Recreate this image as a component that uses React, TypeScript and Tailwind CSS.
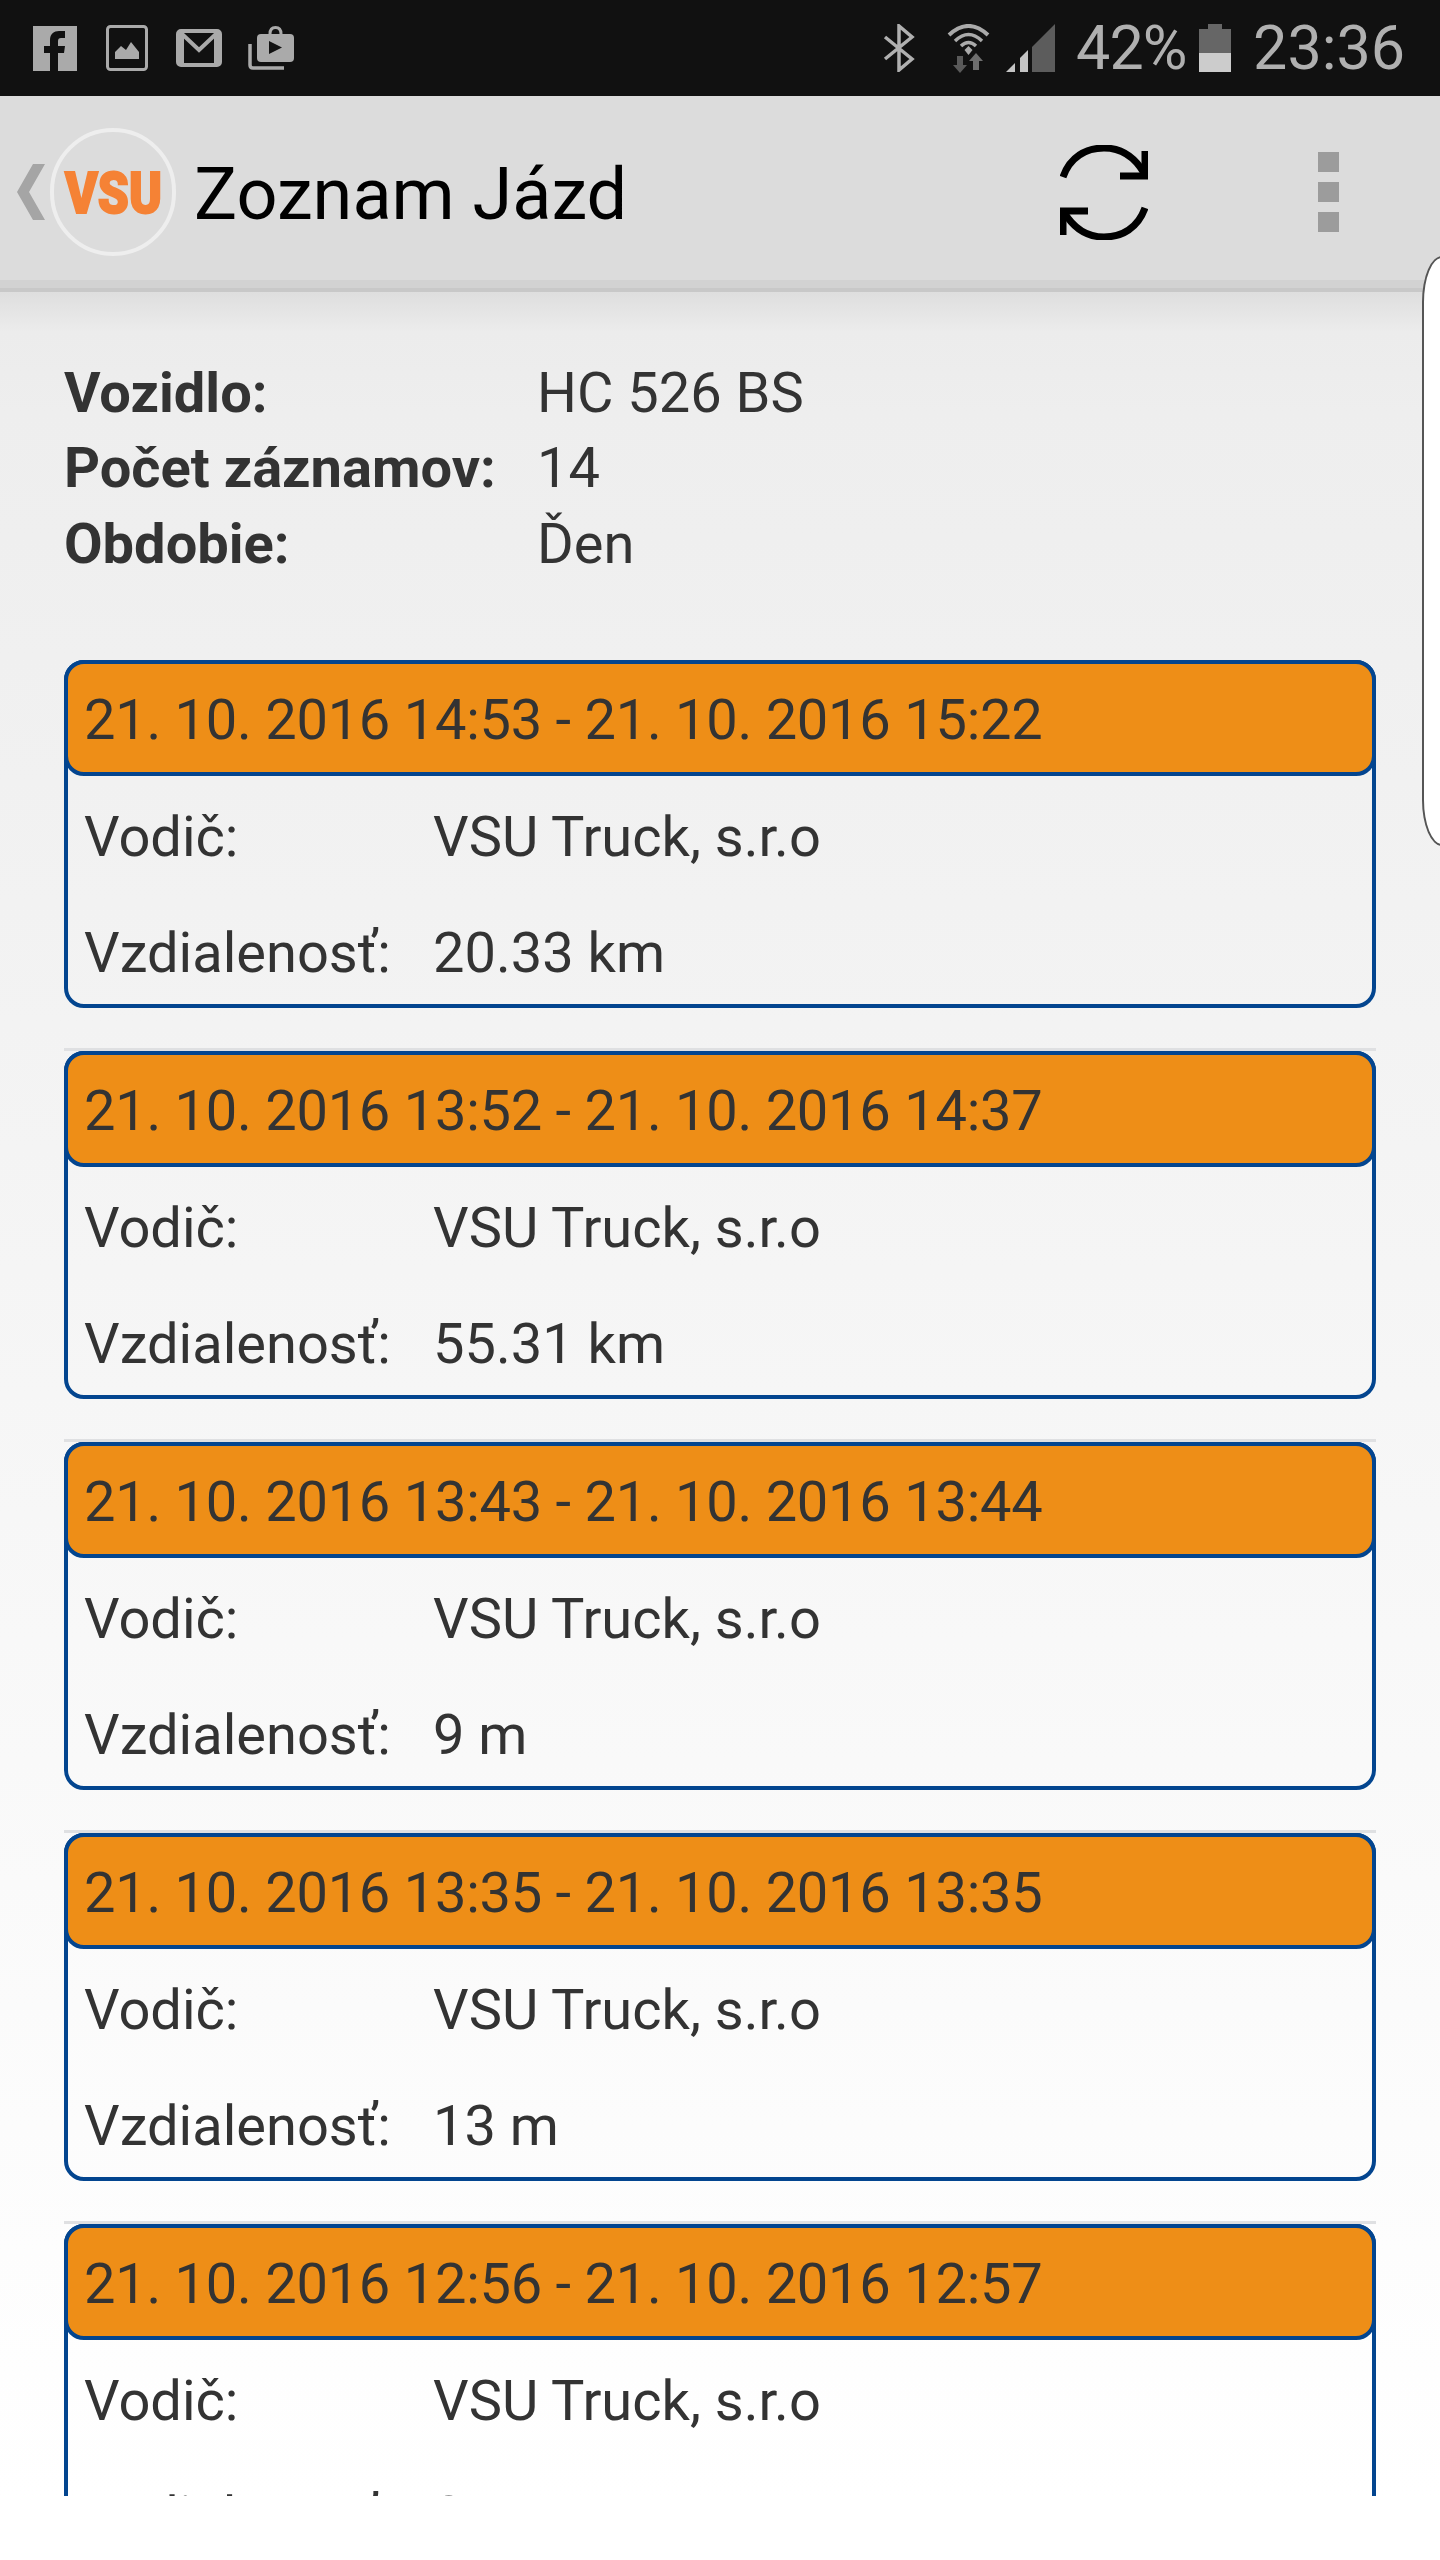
const trips = [
  { time: "21. 10. 2016 14:53 - 21. 10. 2016 15:22", distance: "20.33 km" },
  { time: "21. 10. 2016 13:52 - 21. 10. 2016 14:37", distance: "55.31 km" },
  { time: "21. 10. 2016 13:43 - 21. 10. 2016 13:44", distance: "9 m" },
  { time: "21. 10. 2016 13:35 - 21. 10. 2016 13:35", distance: "13 m" },
  { time: "21. 10. 2016 12:56 - 21. 10. 2016 12:57", distance: "8 m" },
];

const summary = [
  { label: "Vozidlo:", value: "HC 526 BS" },
  { label: "Počet záznamov:", value: "14" },
  { label: "Obdobie:", value: "Ďen" },
];

const StatusLeftIcons = () => (
  <div className="flex items-center">
    <svg width="44" height="45" viewBox="0 0 44 45">
      <rect width="44" height="45" fill="#aaaaaa" />
      <path d="M17 45V27h-6v-7h6v-6c0-6 4-9 9-9h6v7h-4c-2 0-3 1-3 3v5h7l-1 7h-6v18z" fill="#111111" />
    </svg>
    <svg className="ml-[29px]" width="42" height="46" viewBox="0 0 42 46">
      <rect x="1.5" y="1.5" width="39" height="43" rx="3" fill="none" stroke="#aaaaaa" strokeWidth="3" />
      <path d="M9 34v-7l6-6 5 4 5-8 8 10v7z" fill="#aaaaaa" />
    </svg>
    <svg className="ml-[28px]" width="46" height="38" viewBox="0 0 46 38">
      <rect x="2" y="2" width="42" height="34" rx="3" fill="none" stroke="#aaaaaa" strokeWidth="4" />
      <path d="M5 4l18 17L41 4" fill="none" stroke="#aaaaaa" strokeWidth="4" />
      <path d="M3 4h5v31H3zM38 4h5v31h-5z" fill="#aaaaaa" />
    </svg>
    <svg className="ml-[26px]" width="46" height="44" viewBox="0 0 46 44">
      <path d="M2 18v21q0 3 3 3h31" fill="none" stroke="#aaaaaa" strokeWidth="3.5" />
      <path d="M22 8q0-6.500 5.500-6.500T33 8" fill="none" stroke="#aaaaaa" strokeWidth="3" />
      <rect x="9" y="8" width="37" height="28" rx="4" fill="#aaaaaa" />
      <path d="M21 15l13 6.500L21 28z" fill="#111111" />
    </svg>
  </div>
);

const StatusRightIcons = () => (
  <div className="flex items-center font-['Roboto',sans-serif] text-[61px] font-normal leading-none text-[#b0b0b0]">
    <svg width="32" height="48" viewBox="0 0 32 48">
      <path d="M2 13l27 22-13 11V2l13 11L2 35" fill="none" stroke="#b0b0b0" strokeWidth="3.5" />
    </svg>
    <svg className="ml-[32px]" width="43" height="49" viewBox="0 0 43 49">
      <path d="M2 11Q21.500-7 41 11" fill="none" stroke="#aaaaaa" strokeWidth="4" />
      <path d="M8 17Q21.500 4 35 17" fill="none" stroke="#aaaaaa" strokeWidth="3.500" />
      <path d="M14 22Q21.500 15 29 22" fill="none" stroke="#aaaaaa" strokeWidth="3.500" />
      <path d="M17.500 26l4-4 4 4-4 5z" fill="#aaaaaa" />
      <path d="M10 32h6v9h4l-7 8-7-8h4z" fill="#5a5a5a" />
      <path d="M29 29l7 8h-4v9h-6v-9h-4z" fill="#6e6e6e" />
    </svg>
    <svg className="ml-[16px]" width="49" height="48" viewBox="0 0 49 48">
      <path d="M0 48l9-9v9z" fill="#c4c4c4" />
      <path d="M14 34l8-8v22h-8z" fill="#c4c4c4" />
      <path d="M26 23L49 0v48H26z" fill="#5c5c5c" />
    </svg>
    <span className="ml-[21px] w-[109px] tracking-[-1px]">42%</span>
    <svg className="ml-[14px]" width="32" height="48" viewBox="0 0 32 48">
      <path d="M9 0h14v5h9v24H0V5h9z" fill="#666666" />
      <rect y="29" width="32" height="19" fill="#cccccc" />
    </svg>
    <span className="ml-[22px]">23:36</span>
  </div>
);

const RefreshIcon = () => (
  <svg width="88" height="95" viewBox="0 0 88 95">
    <path d="M3 32C10 12 26 3 44 3c16 0 30 8 40 25" fill="none" stroke="#000000" strokeWidth="7" />
    <path d="M85 6v25H60" fill="none" stroke="#000000" strokeWidth="7" />
    <path d="M85 63C78 83 62 92 44 92c-16 0-30-8-40-25" fill="none" stroke="#000000" strokeWidth="7" />
    <path d="M3 90V66h25" fill="none" stroke="#000000" strokeWidth="7" />
  </svg>
);

const TripCard = ({ time, distance }: { time: string; distance: string }) => (
  <div className="h-[348px] rounded-[20px] border-4 border-[#03458f]">
    <div className="-m-[4px] flex h-[116px] items-center rounded-[20px] border-4 border-[#03458f] bg-[#ee8e17] pl-[16px] pt-[5px] tracking-[-0.25px]">
      {time}
    </div>
    <div className="mt-[7px] pl-[16px]">
      <div className="flex h-[116px] items-center">
        <span className="w-[349px]">Vodič:</span>
        <span>VSU Truck, s.r.o</span>
      </div>
      <div className="flex h-[117px] items-center">
        <span className="w-[349px]">Vzdialenosť:</span>
        <span>{distance}</span>
      </div>
    </div>
  </div>
);

export default function App() {
  return (
    <div className="relative h-[2560px] w-[1440px] overflow-hidden bg-white font-['Roboto',sans-serif] text-[56px] leading-none text-[#333333]">
      <div className="flex h-[96px] items-center justify-between bg-[#111111] pl-[33px] pr-[35px]">
        <StatusLeftIcons />
        <StatusRightIcons />
      </div>

      <header className="flex h-[184px] items-center bg-[#dcdcdc] pl-[17px] pt-[8px]">
        <svg width="28" height="56" viewBox="0 0 28 56">
          <path d="M16 0h12L12 28l16 28H16L0 28z" fill="#a5a5a5" />
        </svg>
        <div className="ml-[5px] h-[128px] w-[126px] rounded-full border-[4px] border-[#eeeeee]">
          <svg width="118" height="120" viewBox="0 0 118 120">
            <text
              x="11"
              y="81"
              textLength="97"
              lengthAdjust="spacingAndGlyphs"
              fill="#f58235"
              stroke="#f58235"
              strokeWidth="2"
              fontFamily="Roboto, sans-serif"
              fontSize="58"
              fontWeight="900"
            >
              VSU
            </text>
          </svg>
        </div>
        <h1 className="ml-[18px] mt-[6px] text-[72px] font-normal text-black">Zoznam Jázd</h1>
        <div className="ml-[433px]">
          <RefreshIcon />
        </div>
        <div className="ml-[170px] flex flex-col gap-[10px]">
          <div className="h-[20px] w-[21px] bg-[#9c9c9c]" />
          <div className="h-[20px] w-[21px] bg-[#9c9c9c]" />
          <div className="h-[20px] w-[21px] bg-[#9c9c9c]" />
        </div>
      </header>

      <div className="h-[8px] bg-[#d2d2d2]" />
      <div className="h-[4px] bg-[#c8c8c8]" />

      <main className="h-[2204px] overflow-hidden bg-[linear-gradient(to_bottom,#dedede_0px,#ececec_40px,#eeeeee_120px,#ffffff_100%)] px-[64px] pt-[63px]">
        <div className="grid grid-cols-[473px_1fr] pb-[78px]">
          {summary.map((row) => (
            <div key={row.label} className="contents">
              <div className="flex h-[75.500px] items-center font-bold">{row.label}</div>
              <div className="flex h-[75.500px] items-center">{row.value}</div>
            </div>
          ))}
        </div>
        <div className="flex flex-col">
          {trips.map((trip, index) => (
            <div key={trip.time}>
              {index > 0 && <div className="mt-[40px] h-[3px] bg-[#dfe0e2]" />}
              <TripCard time={trip.time} distance={trip.distance} />
            </div>
          ))}
        </div>
      </main>

      <div className="absolute left-[1422px] top-[256px] h-[590px] w-[80px] rounded-l-[20px_46px] border-2 border-[#555555] bg-white" />
    </div>
  );
}
